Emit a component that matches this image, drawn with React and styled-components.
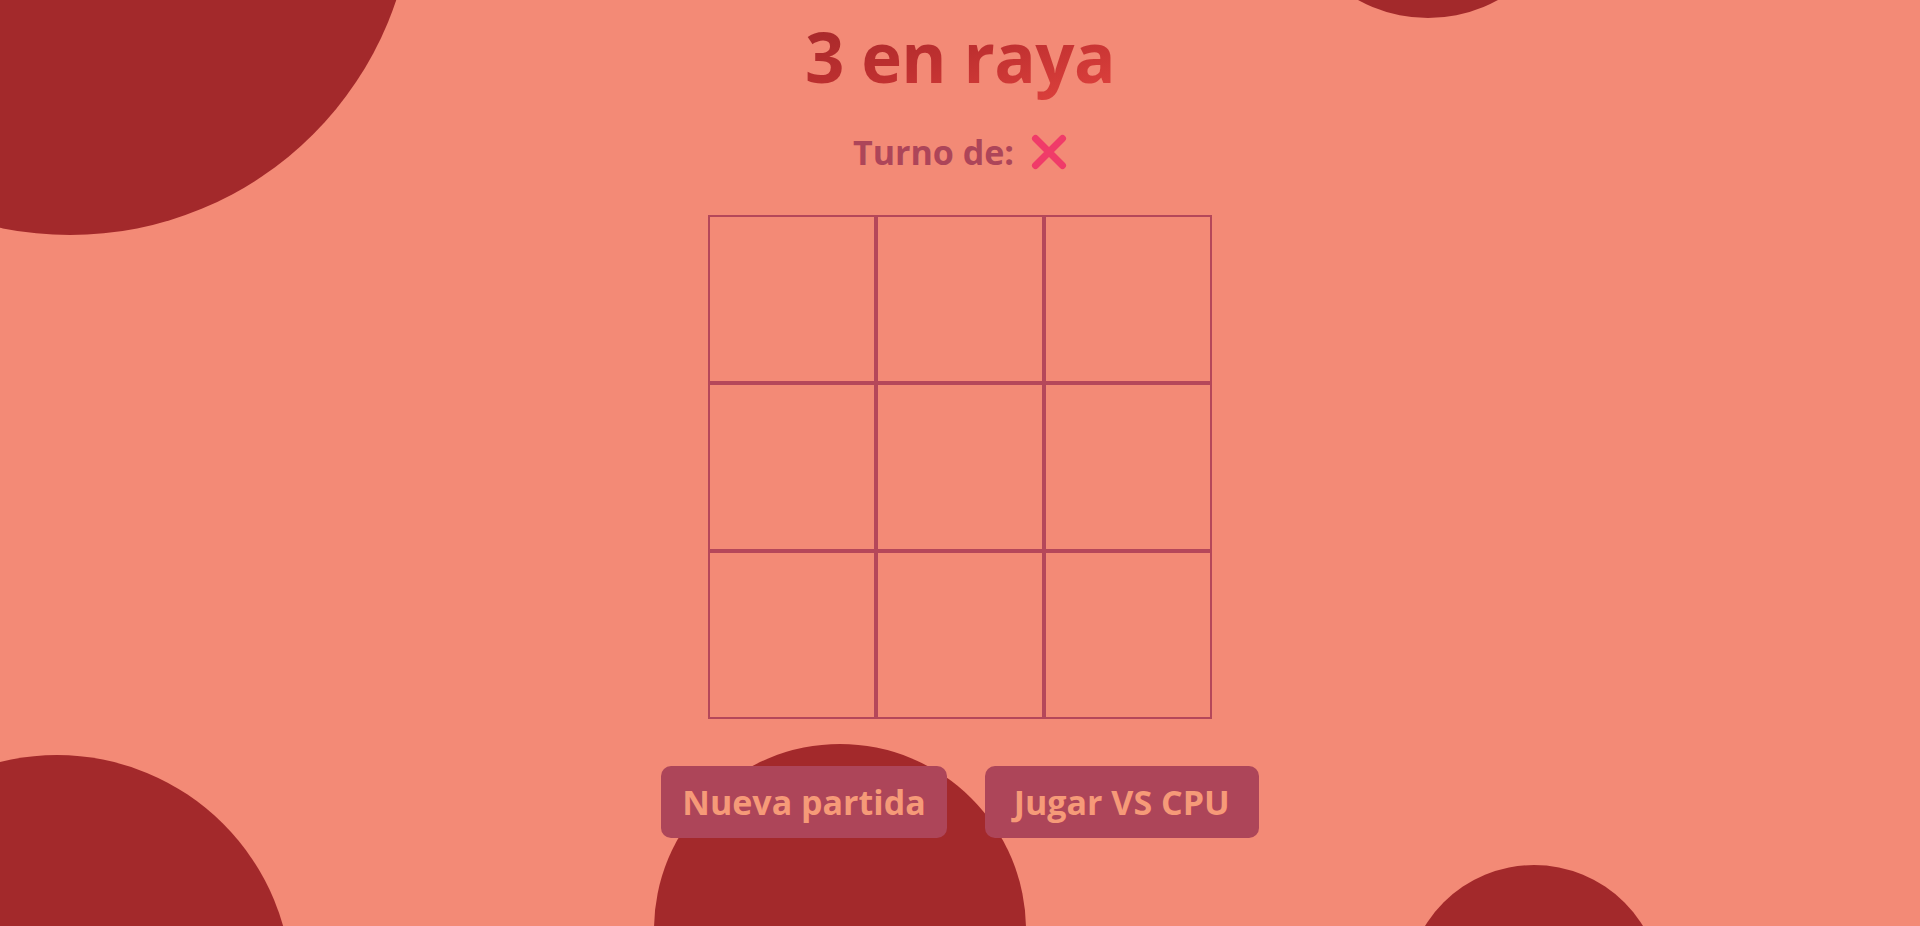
import React, { useState } from 'react';
import styled, { createGlobalStyle } from 'styled-components';

const GlobalStyle = createGlobalStyle`
  html, body {
    margin: 0;
    padding: 0;
    height: 100%;
    background: #f38a76;
    overflow: hidden;
  }
  body {
    font-family: "Open Sans", "Noto Sans", sans-serif;
  }
`;

const Page = styled.main`
  position: relative;
  width: 100%;
  height: 100vh;
  overflow: hidden;
  display: flex;
  flex-direction: column;
  align-items: center;
`;

const Blob = styled.div`
  position: absolute;
  left: ${(p) => p.$x - p.$r}px;
  top: ${(p) => p.$y - p.$r}px;
  width: ${(p) => p.$r * 2}px;
  height: ${(p) => p.$r * 2}px;
  border-radius: 50%;
  background: #a3292b;
  z-index: 0;
`;

const Content = styled.div`
  position: relative;
  z-index: 1;
  display: flex;
  flex-direction: column;
  align-items: center;
`;

const Title = styled.h1`
  margin: 20px 0 -16px;
  padding-bottom: 16px;
  font-size: 69px;
  line-height: 72px;
  font-weight: 700;
  letter-spacing: -0.6px;
  background: linear-gradient(165deg, #a4282a 0%, #bf3030 45%, #e4443f 100%);
  -webkit-background-clip: text;
  background-clip: text;
  color: transparent;
`;

const Turn = styled.div`
  margin-top: 42px;
  display: flex;
  align-items: center;
  gap: 17px;
  height: 36px;
  font-size: 34px;
  font-weight: 700;
  color: #ad4559;
`;

const Board = styled.div`
  margin-top: 45px;
  display: grid;
  grid-template-columns: repeat(3, 168px);
  grid-template-rows: repeat(3, 168px);
`;

const Cell = styled.button`
  margin: 0;
  padding: 0;
  border: 2px solid #b5475a;
  background: transparent;
  cursor: pointer;
  display: flex;
  align-items: center;
  justify-content: center;
`;

const Actions = styled.div`
  margin-top: 47px;
  display: flex;
  gap: 38px;
`;

const Button = styled.button`
  height: 72px;
  padding: 0 ${(p) => p.$pad}px;
  border: none;
  border-radius: 10px;
  background: #ad4559;
  color: #f69a78;
  font-family: inherit;
  font-size: 34px;
  font-weight: 700;
  cursor: pointer;
`;

const Cross = ({ size = 36 }) => (
  <svg width={size} height={size} viewBox="0 0 36 36" fill="none">
    <path d="M4.5 4.5 L31.5 31.5 M31.5 4.5 L4.5 31.5" stroke="#f03b69" strokeWidth="7" strokeLinecap="round" />
  </svg>
);

export default function App() {
  const [cells] = useState(Array(9).fill(null));

  return (
    <>
      <GlobalStyle />
      <Page>
        <Blob $x={70} $y={-109} $r={344} />
        <Blob $x={1428} $y={-127} $r={145} />
        <Blob $x={57} $y={990} $r={235} />
        <Blob $x={840} $y={930} $r={186} />
        <Blob $x={1534} $y={993} $r={128} />
        <Content>
          <Title>3 en raya</Title>
          <Turn>
            <span>Turno de:</span>
            <Cross />
          </Turn>
          <Board>
            {cells.map((c, i) => (
              <Cell key={i} aria-label={`casilla ${i + 1}`}>{c}</Cell>
            ))}
          </Board>
          <Actions>
            <Button $pad={21}>Nueva partida</Button>
            <Button $pad={29}>Jugar VS CPU</Button>
          </Actions>
        </Content>
      </Page>
    </>
  );
}
